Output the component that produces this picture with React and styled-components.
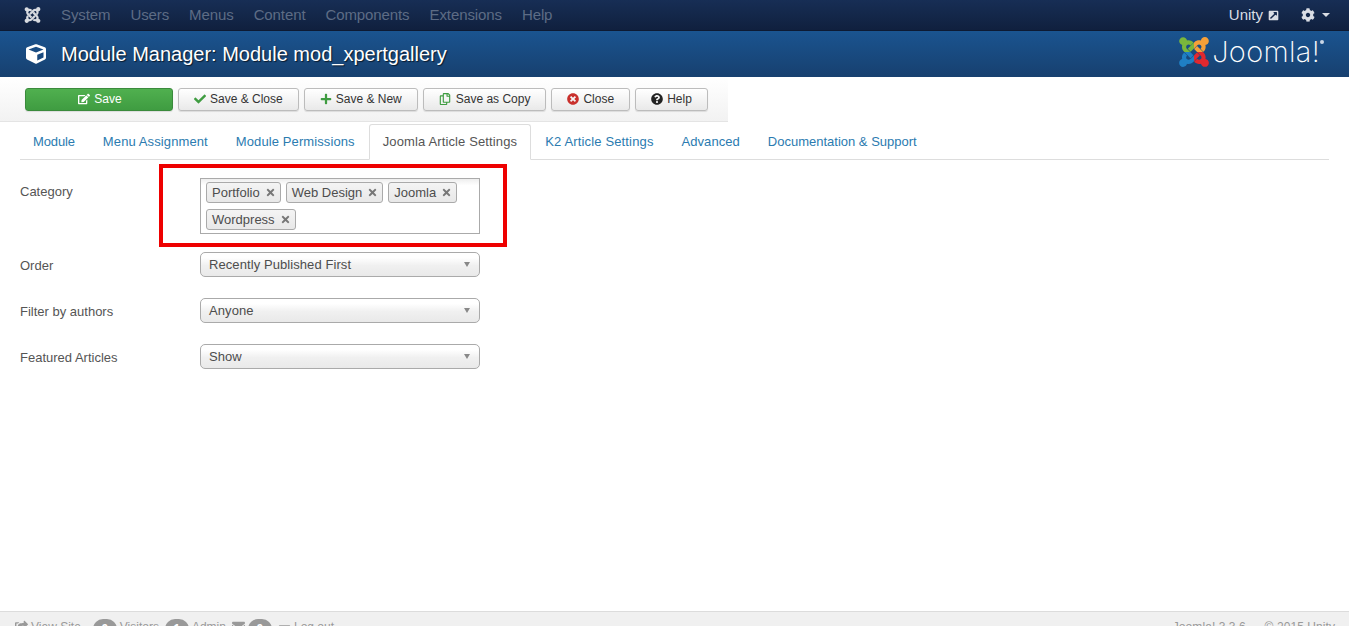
import React from "react";
import styled, { createGlobalStyle } from "styled-components";
import {
  FaJoomla, FaCube, FaCog, FaExternalLinkSquareAlt, FaCheck, FaPlus, FaRegCopy,
  FaTimesCircle, FaQuestionCircle, FaEdit, FaTimes, FaShareSquare, FaEnvelope, FaMinus,
} from "react-icons/fa";

const Global = createGlobalStyle`
  html, body { margin: 0; padding: 0; height: 100%; overflow: hidden; background: #fff; }
  body { font-family: "Liberation Sans", Arial, sans-serif; font-size: 13px; color: #555; }
  * { box-sizing: border-box; }
`;

const Page = styled.div`
  height: 626px; display: flex; flex-direction: column; overflow: hidden; position: relative;
`;

const NavBar = styled.div`
  height: 31px; flex: none; display: flex; align-items: center; justify-content: space-between;
  background: linear-gradient(#172e55, #10203e); border-bottom: 1px solid #0d1a33; padding: 0 19px 1px 24px;
`;
const NavGroup = styled.div`display: flex; align-items: center; gap: ${p => p.$gap}px;`;
const NavBrand = styled(FaJoomla)`width: 17px; height: 18px; color: #d8dbe0;`;
const NavLink = styled.span`font-size: 15px; line-height: 18px; color: #5d6c85; letter-spacing: -.1px;`;
const NavUser = styled.span`
  font-size: 15px; color: #d9dde4; display: flex; align-items: center; gap: 5px;
  svg { width: 11px; height: 11px; margin-top: 2px; }
`;
const NavTool = styled.span`
  display: flex; align-items: center; gap: 7px; color: #d9dde4;
  svg { width: 14px; height: 14px; }
`;
const Caret = styled.i`
  width: 0; height: 0; border-left: ${p => p.$w}px solid transparent; border-right: ${p => p.$w}px solid transparent;
  border-top: ${p => p.$h}px solid ${p => p.$color}; display: block;
`;

const Header = styled.div`
  height: 46px; flex: none; display: flex; align-items: center; justify-content: space-between;
  background: linear-gradient(#1a5490, #17406f); padding: 0 29px 0 26px;
`;
const TitleWrap = styled.div`display: flex; align-items: center; gap: 15px; margin-top: -1px;`;
const TitleIcon = styled(FaCube)`width: 20px; height: 20px; color: #fff;`;
const Title = styled.h1`
  margin: 0; font-size: 20px; line-height: 24px; font-weight: 400; color: #fff;
  text-shadow: 1px 1px 1px rgba(0,0,0,.65);
`;
const Logo = styled.div`display: flex; align-items: center; gap: 1px; margin-top: -4px; position: relative;`;
const LogoText = styled.span`
  font-family: Inter, Lato, sans-serif; font-weight: 200; font-size: 29px; line-height: 32px;
  color: #fff; letter-spacing: .3px;
`;
const LogoDot = styled.i`
  position: absolute; right: -4px; top: 5px; width: 4px; height: 4px; border-radius: 50%; background: #c9d6e6;
`;

const Toolbar = styled.div`
  width: 728px; height: 45px; flex: none; display: flex; align-items: center; padding: 0 0 0 25px; gap: 5px;
  background: linear-gradient(#fff, #f2f2f2); border-bottom: 1px solid #e4e4e4;
`;
const Button = styled.button`
  height: 23px; padding: 0 ${p => p.$primary ? "0 0 2px" : "15px"};
  width: ${p => p.$primary ? "148px" : "auto"};
  display: inline-flex; align-items: center; justify-content: center; gap: ${p => p.$gap || 4}px;
  font: 12px/18px "Liberation Sans", Arial, sans-serif;
  color: ${p => p.$primary ? "#fff" : "#333"};
  background: ${p => p.$primary ? "linear-gradient(#50b04f, #3f9c41)" : "linear-gradient(#fff, #e9e9e9)"};
  border: 1px solid ${p => p.$primary ? "#3a8a3c" : "#bcbcbc"}; border-radius: 3px;
  box-shadow: 0 1px 1px rgba(0,0,0,.1);
  svg { width: 12px; height: 12px; color: ${p => p.$icon || "currentColor"}; }
`;

const Tabs = styled.div`
  flex: none; display: flex; align-items: flex-end; height: 37px; margin: 1px 20px 0; border-bottom: 1px solid #ddd;
`;
const Tab = styled.span`
  height: ${p => p.$active ? 36 : 35}px; padding: 0 13px; line-height: 34px; font-size: 13px; letter-spacing: ${p => p.$track}px;
  white-space: nowrap; color: ${p => p.$active ? "#555" : "#2b7bb0"};
  background: #fff; margin-bottom: ${p => p.$active ? -1 : 0}px;
  border: 1px solid ${p => p.$active ? "#ddd" : "transparent"}; border-bottom-color: ${p => p.$active ? "#fff" : "transparent"};
  border-radius: 3px 3px 0 0;
  &:first-child { margin-left: -1px; }
`;

const Form = styled.div`flex: 1; display: flex; flex-direction: column; gap: 18px; padding: 18px 20px 0;`;
const Row = styled.div`display: flex; align-items: flex-start;`;
const Label = styled.label`width: 180px; flex: none; padding-top: 5px; font-size: 13px; line-height: 18px; color: #555;`;
const MultiSelect = styled.div`
  width: 280px; height: 56px; border: 1px solid #aaa; padding: 3px 5px 0; display: flex; flex-wrap: wrap;
  gap: 6px 5px; align-content: flex-start; background: linear-gradient(#eee 0, #fff 12%);
`;
const Chip = styled.span`
  height: 21px; display: inline-flex; align-items: center; gap: 5px; padding: 0 4px 0 5px; font-size: 13px; color: #4d4d4d;
  background: linear-gradient(#f4f4f4, #e8e8e8); border: 1px solid #aaa; border-radius: 3px;
  svg { width: 11px; height: 11px; color: #777; }
`;
const Select = styled.div`
  width: 280px; height: 25px; margin-bottom: 3px; border: 1px solid #aaa; border-radius: 5px; padding: 0 9px 0 8px; display: flex;
  align-items: center; justify-content: space-between; font-size: 13px; letter-spacing: .08px; color: #4d4d4d;
  background: linear-gradient(#fff 20%, #f0f0f0 55%, #e9e9e9 100%);
`;
const Highlight = styled.div`
  position: absolute; left: 159px; top: 164px; width: 348px; height: 83px; border: 4px solid #ee0000; pointer-events: none;
`;

const Footer = styled.div`
  height: 15px; flex: none; overflow: hidden; background: #f0f0f0; border-top: 1px solid #dcdcdc;
  display: flex; align-items: flex-start; justify-content: space-between; padding: 8px 14px 0 15px;
  font-size: 12px; line-height: 14px; color: #999;
`;
const FooterLeft = styled.div`display: flex; align-items: flex-start; gap: 3px;`;
const FooterRight = styled.span`letter-spacing: .07px;`;
const Badge = styled.span`
  width: 24px; height: 20px; margin: -1px 0 0 ${p => p.$gap}px; border-radius: 10px; background: #999; color: #fff;
  font-weight: 700; font-size: 12px; line-height: 20px; text-align: center;
`;
const FootIcon = styled.span`
  display: inline-flex; margin-left: ${p => p.$gap || 0}px; svg { width: 13px; height: 13px; color: #999; }
`;

const pieces = [
  ["j-green", 0, 0, "#7ab63c"],
  ["j-orange", 17, 0, "#f6a038"],
  ["j-red", 17, 17, "#e0282e"],
  ["j-blue", 0, 17, "#1f7fc4"],
];
const JoomlaMark = () => (
  <svg width="34" height="34" viewBox="0 0 34 34">
    <defs>
      {pieces.map(([id, x, y]) => (
        <clipPath id={id} key={id}><rect x={x} y={y} width="17" height="17" /></clipPath>
      ))}
    </defs>
    {pieces.map(([id, , , color]) => (
      <g clipPath={`url(#${id})`} key={id}><FaJoomla size={34} color={color} /></g>
    ))}
  </svg>
);

const navItems = ["System", "Users", "Menus", "Content", "Components", "Extensions", "Help"];
const tabs = [
  ["Module", -0.13], ["Menu Assignment", 0.11], ["Module Permissions", 0.1],
  ["Joomla Article Settings", 0.13], ["K2 Article Settings", 0.15], ["Advanced", 0.05],
  ["Documentation & Support", 0.0],
];
const chips = ["Portfolio", "Web Design", "Joomla", "Wordpress"];
const selects = [["Order", "Recently Published First"], ["Filter by authors", "Anyone"], ["Featured Articles", "Show"]];

export default function App() {
  return (
    <Page>
      <Global />
      <NavBar>
        <NavGroup $gap={20}>
          <NavBrand />
          {navItems.map(n => <NavLink key={n}>{n}</NavLink>)}
        </NavGroup>
        <NavGroup $gap={22}>
          <NavUser>Unity <FaExternalLinkSquareAlt /></NavUser>
          <NavTool><FaCog /><Caret $w={4} $h={4} $color="#d9dde4" /></NavTool>
        </NavGroup>
      </NavBar>
      <Header>
        <TitleWrap><TitleIcon /><Title>Module Manager: Module mod_xpertgallery</Title></TitleWrap>
        <Logo><JoomlaMark /><LogoText>Joomla!</LogoText><LogoDot /></Logo>
      </Header>
      <Toolbar>
        <Button $primary><FaEdit />Save</Button>
        <Button $icon="#3f9c41"><FaCheck />Save &amp; Close</Button>
        <Button $icon="#3f9c41"><FaPlus />Save &amp; New</Button>
        <Button $icon="#3f9c41" $gap={5}><FaRegCopy />Save as Copy</Button>
        <Button $icon="#c9302c"><FaTimesCircle />Close</Button>
        <Button $icon="#222"><FaQuestionCircle />Help</Button>
      </Toolbar>
      <Tabs>
        {tabs.map(([t, track]) => <Tab key={t} $track={track} $active={t === "Joomla Article Settings"}>{t}</Tab>)}
      </Tabs>
      <Form>
        <Row>
          <Label>Category</Label>
          <MultiSelect>
            {chips.map(c => <Chip key={c}>{c}<FaTimes /></Chip>)}
          </MultiSelect>
        </Row>
        {selects.map(([l, v]) => (
          <Row key={l}>
            <Label>{l}</Label>
            <Select>{v}<Caret $w={3} $h={5} $color="#888" /></Select>
          </Row>
        ))}
      </Form>
      <Highlight />
      <Footer>
        <FooterLeft>
          <FootIcon><FaShareSquare /></FootIcon>View Site
          <Badge $gap={9}>0</Badge>Visitors
          <Badge $gap={3}>1</Badge>Admin
          <FootIcon $gap={3}><FaEnvelope /></FootIcon>
          <Badge $gap={0}>0</Badge>
          <FootIcon $gap={3}><FaMinus /></FootIcon>Log out
        </FooterLeft>
        <FooterRight>Joomla! 3.3.6 — © 2015 Unity</FooterRight>
      </Footer>
    </Page>
  );
}
